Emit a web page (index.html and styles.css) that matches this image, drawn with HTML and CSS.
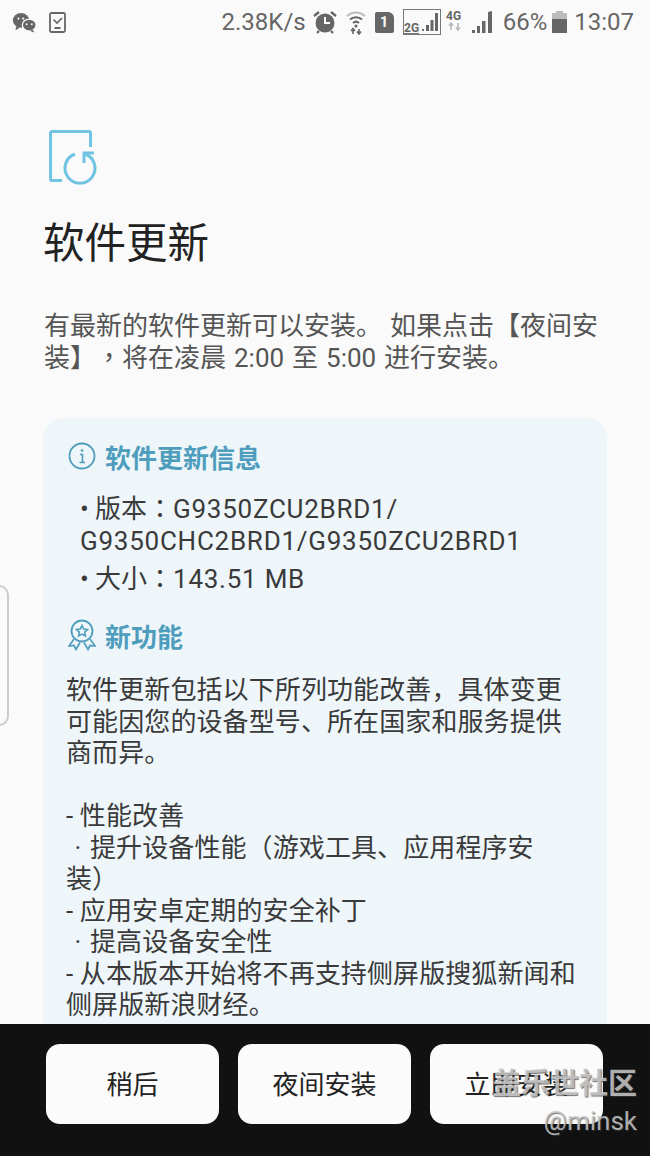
FILE: index.html
```html
<!DOCTYPE html>
<html lang="zh-CN">
<head>
<meta charset="UTF-8">
<title>软件更新</title>
<link rel="stylesheet" href="styles.css">
</head>
<body>
<div class="screen">
    <div class="status-bar">
        <div class="status-left">
            <svg class="ico" width="25" height="21" viewBox="0 0 29 24"><ellipse cx="10.500" cy="9.500" rx="9.500" ry="8.500" fill="#666"/><path d="M5 16l-1 5 5-3z" fill="#666"/><ellipse cx="20" cy="15" rx="8" ry="7" fill="#666" stroke="#fafafa" stroke-width="1.500"/><path d="M24 20l2 3.500-5-1.500z" fill="#666"/><circle cx="7.500" cy="7.500" r="1.300" fill="#fafafa"/><circle cx="13" cy="7.500" r="1.300" fill="#fafafa"/><circle cx="17" cy="14" r="1.100" fill="#fafafa"/><circle cx="23" cy="14" r="1.100" fill="#fafafa"/></svg>
            <svg class="ico" width="17" height="21" viewBox="0 0 17 21"><rect x="1" y="1" width="15" height="19" rx="1.500" fill="none" stroke="#666" stroke-width="1.800"/><path d="M4.500 7.500l3.500 3.500 5-5" fill="none" stroke="#666" stroke-width="1.700"/><path d="M5.500 16h6" stroke="#666" stroke-width="2"/></svg>
        </div>
        <div class="status-right">
            <span>2.38K/s</span>
            <svg class="ico ico-alarm" width="24" height="24" viewBox="0 0 24 24"><circle cx="12" cy="13" r="9.500" fill="#666"/><path d="M12 7v6h5" fill="none" stroke="#fafafa" stroke-width="2"/><path d="M1 6l5-4M23 6l-5-4M6 21l-2 2M18 21l2 2" stroke="#666" stroke-width="2.400"/></svg>
            <svg class="ico ico-wifi" width="20" height="26" viewBox="0 0 20 26"><path d="M1 7a13 13 0 0 1 18 0" fill="none" stroke="#bbb" stroke-width="2"/><path d="M4 10.500a9 9 0 0 1 12 0" fill="none" stroke="#666" stroke-width="2"/><path d="M7 14a4.500 4.500 0 0 1 6 0" fill="none" stroke="#666" stroke-width="2"/><circle cx="10" cy="17" r="1.600" fill="#666"/><path d="M7 25v-5M5 22l2-2.500 2 2.500M13 20v5M11 22.500l2 2.500 2-2.500" fill="none" stroke="#666" stroke-width="1.600"/></svg>
            <div class="sim">1</div>
            <svg class="ico ico-2g" width="38" height="26" viewBox="0 0 38 26"><rect x="0.500" y="0.500" width="37" height="25" fill="none" stroke="#777"/><rect x="1" y="24" width="15" height="2" fill="#777"/><text x="1" y="23" class="net-label">2G</text><path d="M19 20h2v2h-2zM23 16h3v6h-3zM27.500 11h3v11h-3zM32 4h3v18h-3z" fill="#666"/></svg>
            <svg class="ico ico-4g" width="17" height="26" viewBox="0 0 17 26"><text x="0" y="11" class="lte-label">4G</text><path d="M5 14v7M3 16.500l2-2.500 2 2.500M12 21v-7M10 18.500l2 2.500 2-2.500" fill="none" stroke="#bbb" stroke-width="1.600"/></svg>
            <svg class="ico ico-signal" width="22" height="22" viewBox="0 0 22 22"><path d="M0 19h3v3h-3zM5 15h3v7h-3zM10 10h3.500v12h-3.500zM16 1l4-1v22h-4z" fill="#666"/></svg>
            <span class="pct">66%</span>
            <svg class="ico ico-batt" width="15" height="22" viewBox="0 0 15 22"><path d="M4 0h7v2h4v8h-15v-8h4z" fill="#bbb"/><rect x="0" y="8" width="15" height="14" fill="#666"/></svg>
            <span class="clock">13:07</span>
        </div>
    </div>

    <div class="content">
        <svg class="update-icon" width="50" height="56" viewBox="0 0 50 56">
            <path d="M13 50.500H3a1.500 1.500 0 0 1-1.500-1.500V3A1.500 1.500 0 0 1 3 1.500h37A1.500 1.500 0 0 1 41.500 3v14" fill="none" stroke="#70c4e2" stroke-width="3"/>
            <path d="M26 24A15 15 0 1 0 36 24" fill="none" stroke="#70c4e2" stroke-width="3"/>
            <path d="M45 23H35V33" fill="none" stroke="#70c4e2" stroke-width="3"/>
        </svg>
        <h1 class="title">软件更新</h1>
        <p class="intro">有最新的软件更新可以安装。 如果点击【夜间安装】<span class="tc" lang="zh-TW">，</span>将在凌晨 2:00 至 5:00 进行安装。</p>

        <div class="card">
            <div class="card-head">
                <svg width="28" height="28" viewBox="0 0 28 28"><circle cx="14" cy="14" r="12.500" fill="none" stroke="#4f9dbd" stroke-width="1.800"/><circle cx="14" cy="8.500" r="1.300" fill="#4f9dbd"/><path d="M12 12.500h2.500V20M11.500 20.500h5.500" fill="none" stroke="#4f9dbd" stroke-width="1.600"/></svg>
                <span>软件更新信息</span>
            </div>
            <div class="info-list">
                <div><span class="bullet">•</span>版本<span class="tc" lang="zh-TW">：</span><span class="code">G9350ZCU2BRD1/<br>G9350CHC2BRD1/G9350ZCU2BRD1</span></div>
                <div class="info-size"><span class="bullet">•</span>大小<span class="tc" lang="zh-TW">：</span><span class="code">143.51 MB</span></div>
            </div>
            <div class="card-head head-new">
                <svg width="28" height="32" viewBox="0 0 28 32"><circle cx="14" cy="12" r="10.500" fill="none" stroke="#4f9dbd" stroke-width="1.800"/><path d="M14 6.500l1.700 3.500 3.800.5-2.800 2.600.7 3.800-3.400-1.800-3.400 1.800.7-3.800-2.800-2.600 3.800-.5z" fill="none" stroke="#4f9dbd" stroke-width="1.600"/><path d="M6 20l-5 7 5-.5 2 4 4-7M22 20l5 7-5-.5-2 4-4-7" fill="none" stroke="#4f9dbd" stroke-width="1.700"/></svg>
                <span>新功能</span>
            </div>
            <p class="notes">软件更新包括以下所列功能改善，具体变更可能因您的设备型号、所在国家和服务提供商而异。<br><br>- 性能改善<br><span class="dot">·</span>提升设备性能（游戏工具、应用程序安<br>装）<br>- 应用安卓定期的安全补丁<br><span class="dot">·</span>提高设备安全性<br>- 从本版本开始将不再支持侧屏版搜狐新闻和侧屏版新浪财经。</p>
        </div>
    </div>

    <div class="footer">
        <button class="btn">稍后</button>
        <button class="btn">夜间安装</button>
        <button class="btn">立即安装</button>
    </div>

    <div class="edge-handle"></div>
    <div class="watermark">
        <div class="wm-name">盖乐世社区</div>
        <div class="wm-user">@minsk</div>
    </div>
</div>
</body>
</html>
```

FILE: styles.css
```css
* {
    box-sizing: border-box;
}
body {
    margin: 0;
    font-family: Roboto, "Noto Sans CJK SC", sans-serif;
    color: #3a3a3a;
    text-spacing-trim: space-all;
}
.screen {
    position: relative;
    width: 650px;
    height: 1156px;
    overflow: hidden;
    display: flex;
    flex-direction: column;
    background-color: #fafafa;
}
.status-bar {
    height: 44px;
    flex-shrink: 0;
    display: flex;
    justify-content: space-between;
    align-items: center;
    padding: 0 16px 0 12px;
    color: #666;
    font-size: 24px;
}
.status-left, .status-right {
    display: flex;
    align-items: center;
}
.status-left {
    gap: 12px;
}
.status-right {
    gap: 8px;
}
.ico {
    display: block;
}
.ico-alarm {
    margin-left: -1px;
}
.ico-wifi {
    margin-left: 1px;
}
.sim {
    width: 19px;
    height: 21px;
    margin-left: 1px;
    background-color: #666;
    color: #fafafa;
    border-radius: 2px 6px 2px 2px;
    font-size: 15px;
    font-weight: bold;
    line-height: 21px;
    text-align: center;
}
.ico-2g {
    margin-left: 1px;
}
.ico-4g {
    margin-left: -3px;
}
.ico-signal, .pct {
    margin-left: 1px;
}
.ico-batt {
    margin-left: -3px;
}
.clock {
    margin-left: -1px;
}
.net-label, .lte-label {
    font-family: Roboto, sans-serif;
    font-size: 12px;
    font-weight: bold;
    fill: #666;
}
.content {
    flex: 1;
    min-height: 0;
    overflow: hidden;
    padding: 86px 43px 0;
}
.update-icon {
    display: block;
    margin-left: 6px;
}
.title {
    margin: 30px 0 0;
    font-size: 41.500px;
    font-weight: 400;
    line-height: 56px;
    color: #222;
}
.intro {
    margin: 38px 0 0 1px;
    font-size: 26px;
    line-height: 32px;
    word-spacing: 1.500px;
    color: #555;
}
.tc {
    font-family: "Noto Sans CJK TC", sans-serif;
    line-height: 0;
}
.card {
    margin-top: 44px;
    height: 700px;
    padding: 20px 23px;
    background-color: #eef6fa;
    border-radius: 20px;
}
.card-head {
    display: flex;
    align-items: center;
    gap: 9px;
    height: 36px;
    margin-left: 2px;
    font-size: 26px;
    font-weight: 700;
    color: #4f9dbd;
}
.info-list {
    margin-top: 19px;
    padding-left: 14px;
    font-size: 26px;
    line-height: 32px;
}
.bullet {
    display: inline-block;
    width: 15px;
}
.code {
    letter-spacing: 0.750px;
}
.info-size {
    margin-top: 6px;
}
.head-new {
    margin-top: 22px;
}
.notes {
    margin: 22px 0 0;
    font-size: 26px;
    line-height: 31.500px;
    letter-spacing: 0.100px;
}
.dot {
    display: inline-block;
    width: 24px;
    text-align: center;
}
.footer {
    height: 132px;
    flex-shrink: 0;
    display: flex;
    gap: 19px;
    padding: 20px 46px 32px;
    background-color: #111;
}
.btn {
    width: 173px;
    padding: 0 0 4px;
    border: none;
    border-radius: 14px;
    background-color: #fbfbfb;
    font-family: Roboto, "Noto Sans CJK SC", sans-serif;
    font-size: 26px;
    color: #222;
}
.edge-handle {
    position: absolute;
    left: -12px;
    top: 585px;
    width: 21px;
    height: 141px;
    border: 2px solid #ccc;
    border-radius: 10px;
}
.watermark {
    position: absolute;
    right: 13px;
    top: 1065px;
    text-align: right;
    color: rgba(200, 200, 200, 0.85);
    text-shadow: 1px 1px 1px rgba(60, 60, 60, 0.7);
}
.wm-name {
    font-size: 29px;
    line-height: 38px;
    font-weight: 700;
}
.wm-user {
    font-size: 26px;
    line-height: 36px;
}
```
